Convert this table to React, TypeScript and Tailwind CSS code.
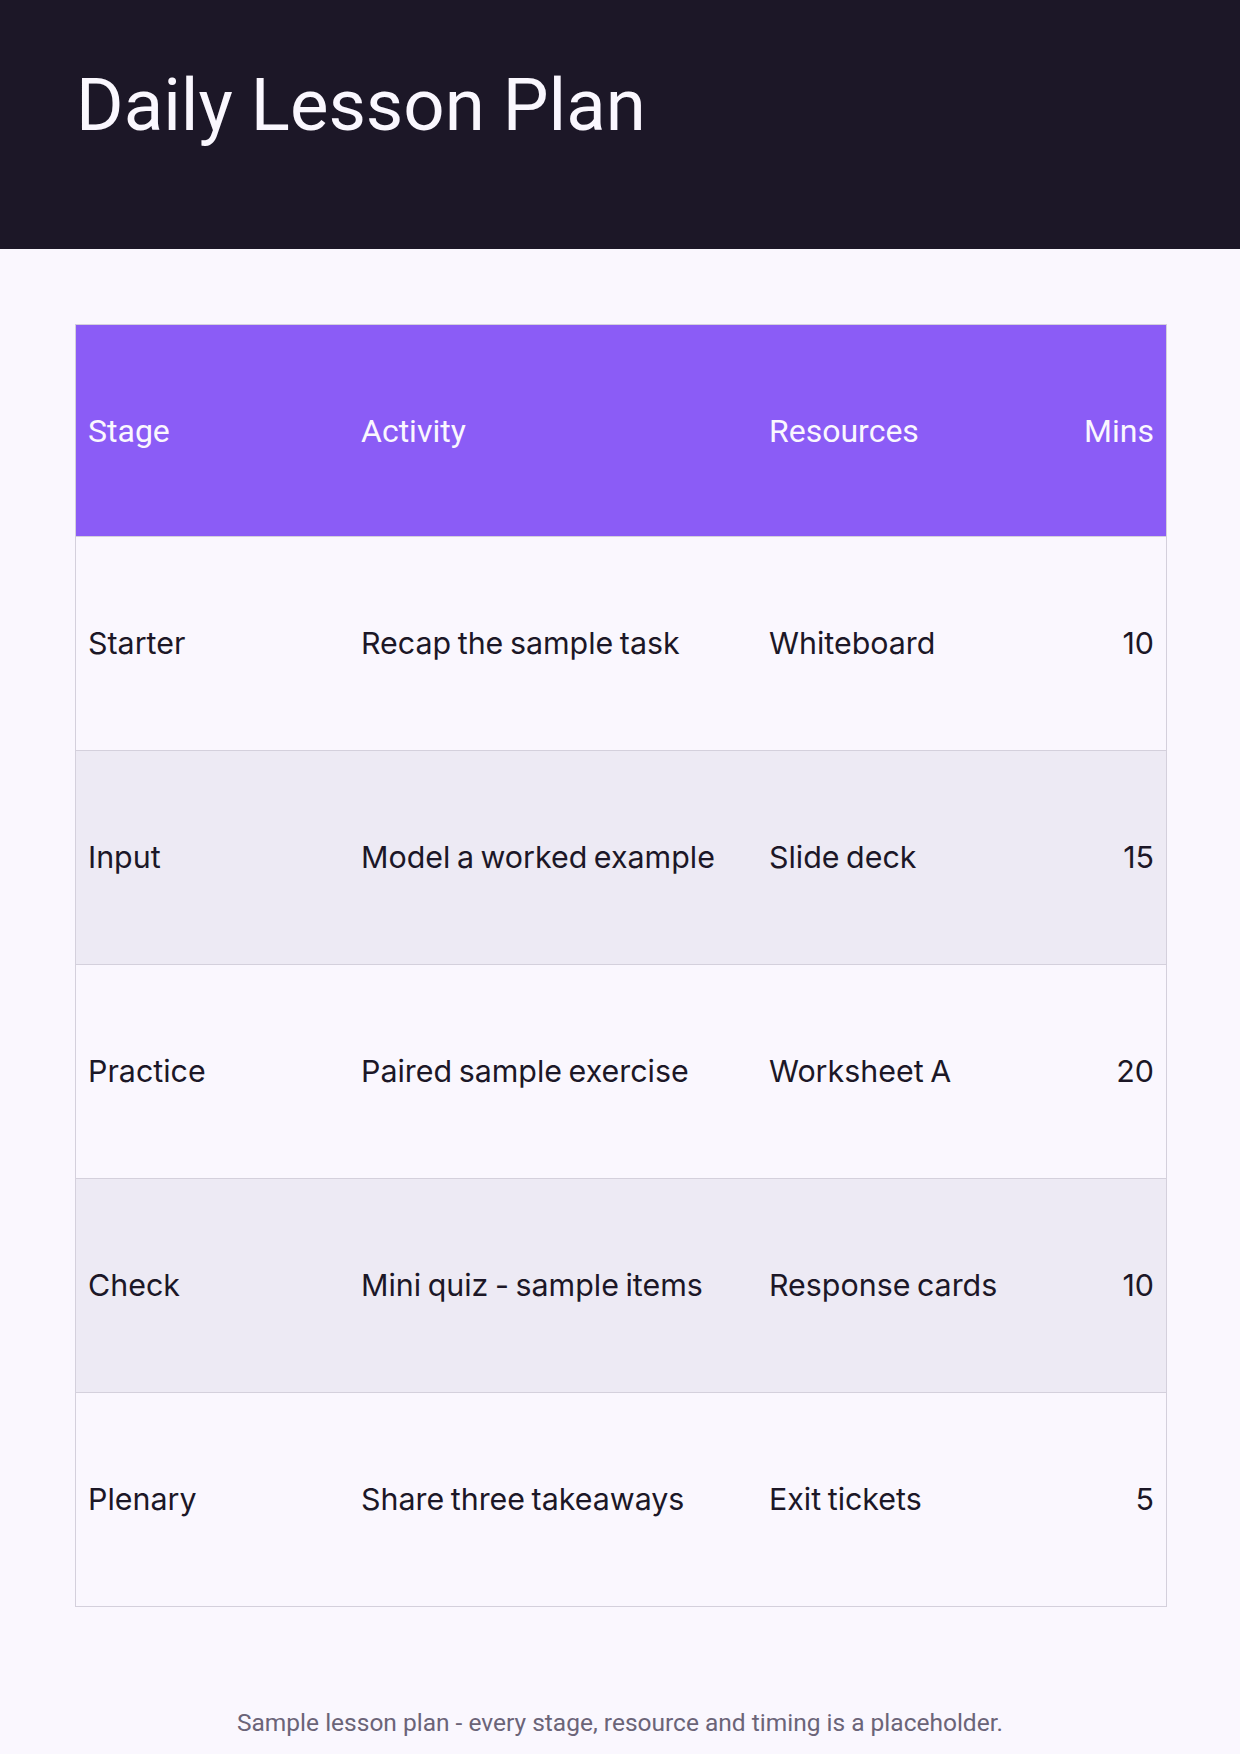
const rows = [
  { stage: 'Starter', activity: 'Recap the sample task', resource: 'Whiteboard', mins: 10 },
  { stage: 'Input', activity: 'Model a worked example', resource: 'Slide deck', mins: 15 },
  { stage: 'Practice', activity: 'Paired sample exercise', resource: 'Worksheet A', mins: 20 },
  { stage: 'Check', activity: 'Mini quiz - sample items', resource: 'Response cards', mins: 10 },
  { stage: 'Plenary', activity: 'Share three takeaways', resource: 'Exit tickets', mins: 5 },
]

const cols = 'grid grid-cols-[273px_408px_1fr_140px] items-center'

export default function App() {
  return (
    <div className="min-h-screen bg-[#faf7fe] font-['Inter',sans-serif] text-[#1c1727]">
      <header className="h-[249px] bg-[#1c1727] px-[76px] pt-[70px]">
        <h1 className="font-['Roboto',sans-serif] text-[72.6px] leading-none font-normal text-[#faf7fe]">
          Daily Lesson Plan
        </h1>
      </header>

      <div className="mt-[75px] mr-[73px] ml-[75px] border border-[#d4d0dc]">
        <div className={`${cols} h-[211px] bg-[#8b5cf6] font-['Roboto',sans-serif] text-[32px] text-[#faf7fe]`}>
          <div className="pl-[12px]">Stage</div>
          <div className="pl-[12px]">Activity</div>
          <div className="pl-[12px]">Resources</div>
          <div className="pr-[12px] text-right">Mins</div>
        </div>
        {rows.map((r, i) => (
          <div
            key={r.stage}
            className={`${cols} h-[214px] border-t border-[#d4d0dc] text-[30.4px] [word-spacing:-2px] ${
              i % 2 === 1 ? 'bg-[#edeaf4]' : 'bg-[#faf7fe]'
            }`}
          >
            <div className="pl-[12px]">{r.stage}</div>
            <div className="pl-[12px]">{r.activity}</div>
            <div className="pl-[12px]">{r.resource}</div>
            <div className="pr-[12px] text-right">{r.mins}</div>
          </div>
        ))}
      </div>

      <p className="mt-[104px] pb-[20px] text-center font-['Roboto',sans-serif] text-[24.5px] leading-none text-[#6b6478]">
        Sample lesson plan - every stage, resource and timing is a placeholder.
      </p>
    </div>
  )
}
